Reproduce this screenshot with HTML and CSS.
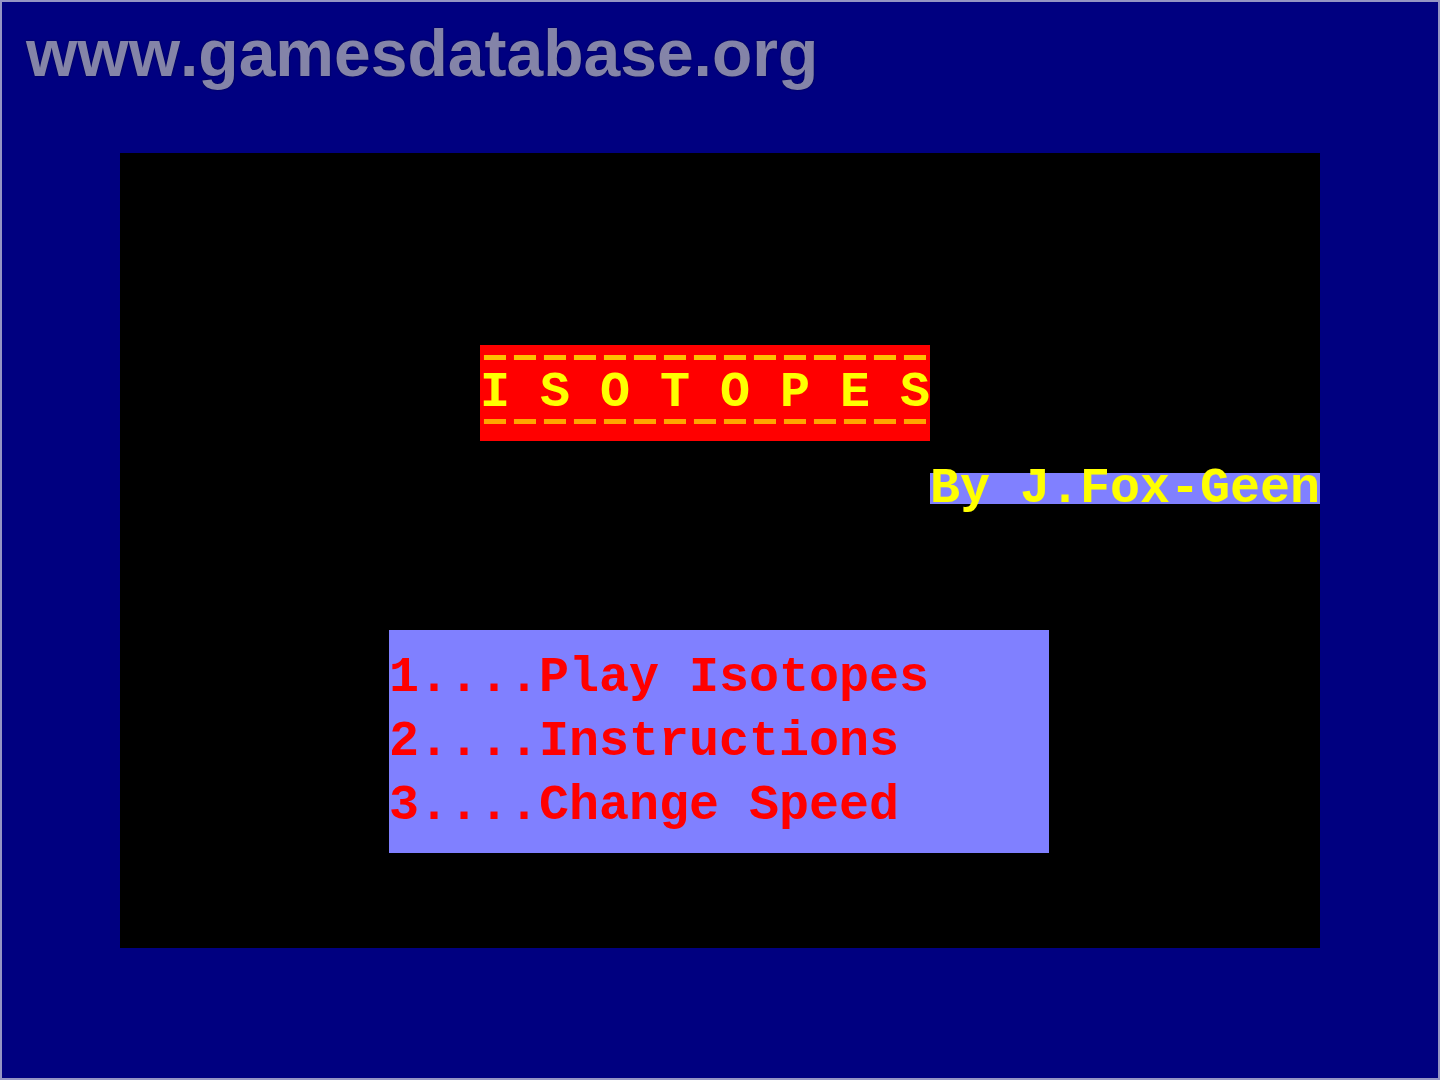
FILE: index.html
```
<!DOCTYPE html>

<html lang="en">
	<head>
		<meta charset="utf-8">
		<title>Isotopes</title>
		<link rel="stylesheet" href="styles.css">
	</head>
	<body>
		<header class="site">www.gamesdatabase.org</header>
		<main class="screen">
			<div class="title">
				<div class="dashes">–––––––––––––––</div>
				<h1>I S O T O P E S</h1>
				<div class="dashes low">–––––––––––––––</div>
			</div>
			<div class="author">By J.Fox-Geen</div>
			<nav class="menu">
				<button type="button">1....Play Isotopes</button>
				<button type="button">2....Instructions</button>
				<button type="button">3....Change Speed</button>
			</nav>
		</main>
	</body>
</html>
```

FILE: styles.css
```
* {
	box-sizing: border-box;
}

body {
	display: flex;
	flex-direction: column;
	min-height: 100vh;
	margin: 0;
	padding: 13px 118px 0;
	background: #000080;
	border: 2px solid #9494c4;
}

.site {
	margin: 0 -94px 62px;
	color: #8484a8;
	font: bold 66px/76px "Liberation Sans", Arial, sans-serif;
	font-kerning: none;
	text-shadow: 0 0 2px #000040;
}

.screen {
	display: flex;
	flex-direction: column;
	align-items: flex-start;
	padding: 192px 0 95px;
	background: #000000;
	font: bold 50px/32px "Liberation Mono", monospace;
	white-space: nowrap;
}

.title {
	width: 15ch;
	margin-left: 30%;
	background: #ff0000;
	color: #ffff00;
}

.title h1 {
	margin: 0;
	font: inherit;
}

.dashes {
	height: 32px;
	color: #ffc000;
	line-height: 24px;
}

.low {
	color: #ffa500;
}

.author {
	align-self: flex-end;
	margin: 32px 0 126px;
	background: #8080ff;
	color: #ffff00;
	line-height: 31px;
}

.menu {
	display: flex;
	flex-direction: column;
	gap: 32px;
	width: 22ch;
	margin-left: 269px;
	padding: 32px 0 31px;
	background: #8080ff;
}

.menu button {
	padding: 0;
	border: 0;
	background: none;
	color: #ff0000;
	font: inherit;
	text-align: left;
	cursor: pointer;
}
```
